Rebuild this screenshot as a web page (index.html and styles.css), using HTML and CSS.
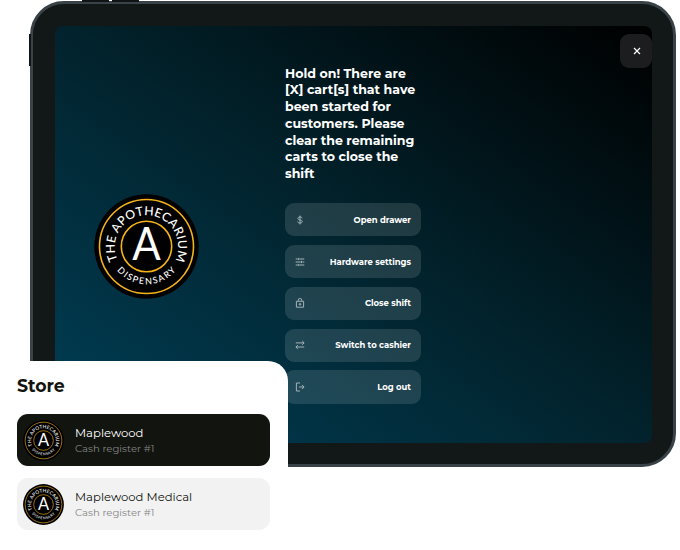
FILE: index.html
```html
<!DOCTYPE html>
<html lang="en">
<head>
<meta charset="utf-8">
<title>Close shift</title>
<link rel="stylesheet" href="styles.css">
</head>
<body>
<svg class="defs" aria-hidden="true">
  <defs>
    <symbol id="logo" viewBox="0 0 105 105">
      <circle cx="52.5" cy="52.5" r="52.2" fill="#000"/>
      <circle cx="52.5" cy="52.5" r="47" fill="none" stroke="#f5b31a" stroke-width="1.6"/>
      <circle cx="52.5" cy="52.5" r="25.2" fill="none" stroke="#f5b31a" stroke-width="1.6"/>
      <text x="52.5" y="66" class="logo-a" text-anchor="middle" textLength="28.5" lengthAdjust="spacingAndGlyphs">A</text>
      <text class="logo-name"><textPath href="#logo-top-path" textLength="127">THE APOTHECARIUM</textPath></text>
      <text class="logo-kind"><textPath href="#logo-bottom-path" textLength="67">DISPENSARY</textPath></text>
      <path id="logo-top-path" fill="none" d="M23.7 66.2 A31.7 31.7 0 1 1 81.3 66.2"/>
      <path id="logo-bottom-path" fill="none" d="M23 76.4 A38.2 38.2 0 0 0 82 76.4"/>
    </symbol>
  </defs>
</svg>
<main class="stage">
  <div class="tablet">
    <i class="key key-up"></i><i class="key key-down"></i><i class="key key-power"></i>
    <div class="screen">
      <svg class="brand"><use href="#logo"/></svg>
      <section class="menu">
        <h1>Hold on! There are<br>[X] cart[s] that have<br>been started for<br>customers. Please<br>clear the remaining<br>carts to close the<br>shift</h1>
        <button><svg viewBox="0 0 10 10"><path d="M5 .6v8.8M7.2 3.3C6.9 2.3 6.1 2 5 2S2.8 2.5 2.8 3.4C2.8 5.4 7.3 4.4 7.3 6.6 7.3 7.5 6.3 8 5 8S2.8 7.5 2.6 6.5"/></svg><span>Open drawer</span></button>
        <button><svg viewBox="0 0 10 10"><path d="M.7 2h2.1M4.4 2h4.9M.7 5h5.1M7.4 5h1.9M.7 8h2.1M4.4 8h4.9M3.7 .9v2.2M6.5 3.9v2.2M3.7 6.9v2.2"/></svg><span>Hardware settings</span></button>
        <button><svg viewBox="0 0 10 10"><path d="M1.4 3.3h7.2v5.9H1.4zM3.2 3.1V2.3a1.8 1.8 0 0 1 3.6 0v.8M5 4.9v2.6M3.7 6.2h2.6"/></svg><span>Close shift</span></button>
        <button><svg viewBox="0 0 10 10"><path d="M.8 2.9h8.3M7.2 1 9.1 2.9 7.2 4.8M9.2 7H.9M2.8 5.1.9 7l1.9 1.9"/></svg><span>Switch to cashier</span></button>
        <button><svg viewBox="0 0 10 10"><path d="M5 1H1.4v8H5M4 5h5M7 2.9 9.1 5 7 7.1"/></svg><span>Log out</span></button>
      </section>
      <button class="close" aria-label="Close"><svg viewBox="0 0 8 8"><path d="m1 1 6 6M7 1 1 7"/></svg></button>
    </div>
  </div>
  <aside class="store">
    <h2>Store</h2>
    <div class="card selected"><svg><use href="#logo"/></svg><div><p class="name">Maplewood</p><p class="register">Cash register #1</p></div></div>
    <div class="card"><svg><use href="#logo"/></svg><div><p class="name">Maplewood Medical</p><p class="register">Cash register #1</p></div></div>
  </aside>
</main>
</body>
</html>
```
FILE: styles.css
```css
* { box-sizing: border-box; }
body { margin: 0; background: #fff; font-family: Montserrat, Inter, sans-serif; }
h1, h2, p { margin: 0; }
.defs { position: absolute; width: 0; height: 0; }
.stage { position: relative; width: 680px; height: 550px; overflow: hidden; padding: 1px 0 0 30px; }
.tablet { position: relative; width: 646px; height: 466px; padding: 22px 21px 21px 22px; background: #121718; border: 3px solid #394246; border-radius: 34px; }
.key { position: absolute; background: #101415; }
.key-up { left: 48.5px; top: -4px; width: 27px; height: 2px; }
.key-down { left: 79px; top: -4px; width: 27px; height: 2px; }
.key-power { left: -4px; top: 30px; width: 2px; height: 32px; }
.screen { display: grid; grid-template-columns: 230px 136px 1fr; width: 597px; height: 417px; border-radius: 8px; overflow: hidden; background: linear-gradient(to top right, #003f57 0%, #02232d 50%, #000 100%); }
.brand { width: 105px; height: 105px; margin: 168px 0 0 39px; }
.logo-a { font: 46px Lato, sans-serif; fill: #fff; }
.logo-name { font: 500 12.3px Lato, sans-serif; fill: #fff; }
.logo-kind { font: 500 9px Lato, sans-serif; fill: #fff; }
.menu { padding-top: 39.5px; display: flex; flex-direction: column; gap: 8.4px; }
h1 { height: 129px; white-space: nowrap; color: #fff; font-size: 12.58px; line-height: 16.8px; font-weight: 700; }
.menu button { display: flex; align-items: center; justify-content: space-between; flex: none; height: 33.5px; padding: 0 10px; border: 0; border-radius: 9px; background: rgba(255,255,255,.12); color: #fff; font: 700 8.43px Montserrat, Inter, sans-serif; }
.menu svg { width: 10px; height: 10px; fill: none; stroke: #a3b2b8; stroke-width: 1; }
.close { justify-self: end; display: grid; place-items: center; width: 32px; height: 34px; margin-top: 8px; padding: 0 0 0 1.5px; border: 0; border-radius: 9px; background: #1b1d1e; }
.close svg { width: 8px; height: 8px; fill: none; stroke: #fff; stroke-width: 1.2; }
.store { position: absolute; left: 0; top: 361px; width: 288px; height: 189px; padding: 13.5px 18px 0 17px; background: #fff; border-top-right-radius: 20px; }
h2 { height: 39.8px; color: #12140f; font-size: 17.3px; line-height: 21px; font-weight: 700; }
.card { display: flex; align-items: center; gap: 11.5px; height: 52px; margin-bottom: 12px; padding-left: 5.5px; border-radius: 11px; background: #f2f2f2; color: #10120e; }
.card svg { width: 41px; height: 41px; flex: none; }
.card div { padding-top: 1.5px; }
.selected { background: #12140f; color: #fff; }
.name { font-size: 11.65px; line-height: 15px; }
.register { font-size: 10.1px; line-height: 15px; color: #858585; }
```
